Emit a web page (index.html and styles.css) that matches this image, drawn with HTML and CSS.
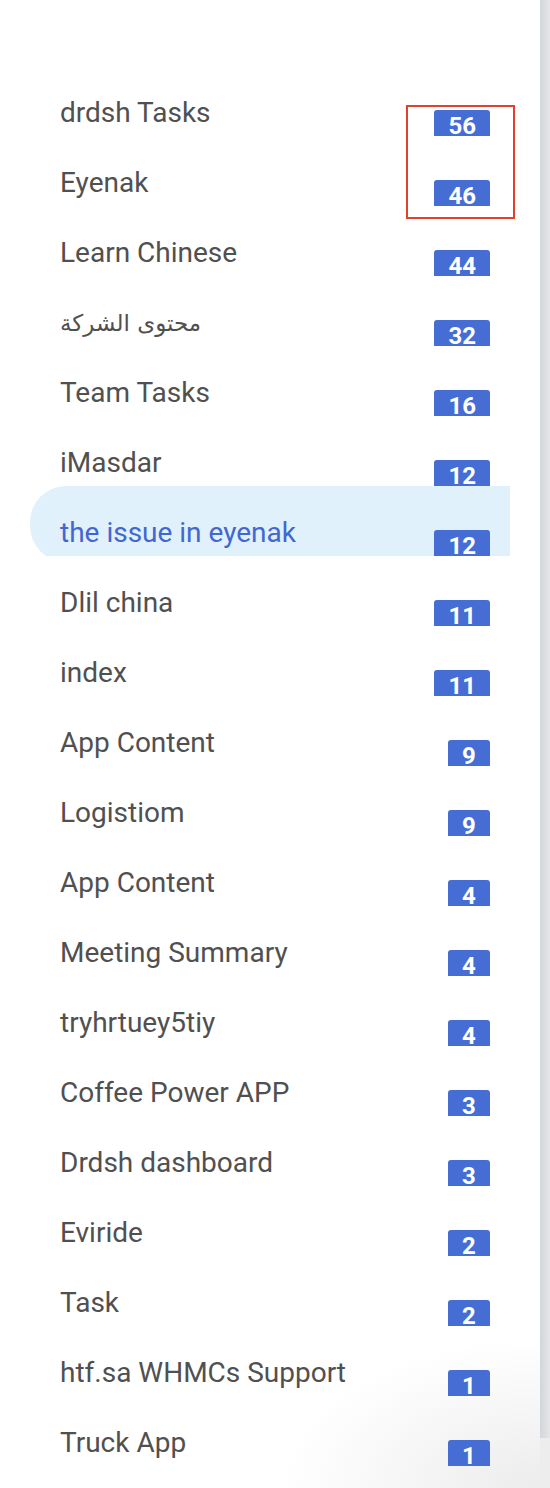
FILE: index.html
```html
<!DOCTYPE html>
<html lang="en">
<head>
<meta charset="utf-8">
<title>Projects</title>
<link rel="stylesheet" href="styles.css">
</head>
<body>
<div class="page">
  <nav class="sidebar">
    <ul class="list">
      <li class="row"><div class="item"><span class="name">drdsh Tasks</span><span class="badge">56</span></div></li>
      <li class="row"><div class="item"><span class="name">Eyenak</span><span class="badge">46</span></div></li>
      <li class="row"><div class="item"><span class="name">Learn Chinese</span><span class="badge">44</span></div></li>
      <li class="row"><div class="item"><span class="name arabic" dir="rtl">محتوى الشركة</span><span class="badge">32</span></div></li>
      <li class="row"><div class="item"><span class="name">Team Tasks</span><span class="badge">16</span></div></li>
      <li class="row"><div class="item"><span class="name">iMasdar</span><span class="badge">12</span></div></li>
      <li class="row"><div class="item active"><span class="name">the issue in eyenak</span><span class="badge">12</span></div></li>
      <li class="row"><div class="item"><span class="name">Dlil china</span><span class="badge">11</span></div></li>
      <li class="row"><div class="item"><span class="name">index</span><span class="badge">11</span></div></li>
      <li class="row"><div class="item"><span class="name">App Content</span><span class="badge">9</span></div></li>
      <li class="row"><div class="item"><span class="name">Logistiom</span><span class="badge">9</span></div></li>
      <li class="row"><div class="item"><span class="name">App Content</span><span class="badge">4</span></div></li>
      <li class="row"><div class="item"><span class="name">Meeting Summary</span><span class="badge">4</span></div></li>
      <li class="row"><div class="item"><span class="name">tryhrtuey5tiy</span><span class="badge">4</span></div></li>
      <li class="row"><div class="item"><span class="name">Coffee Power APP</span><span class="badge">3</span></div></li>
      <li class="row"><div class="item"><span class="name">Drdsh dashboard</span><span class="badge">3</span></div></li>
      <li class="row"><div class="item"><span class="name">Eviride</span><span class="badge">2</span></div></li>
      <li class="row"><div class="item"><span class="name">Task</span><span class="badge">2</span></div></li>
      <li class="row"><div class="item"><span class="name">htf.sa WHMCs Support</span><span class="badge">1</span></div></li>
      <li class="row"><div class="item"><span class="name">Truck App</span><span class="badge">1</span></div></li>
    </ul>
  </nav>
  <div class="scrollbar">
    <div class="thumb"></div>
    <div class="track"></div>
  </div>
  <div class="highlight-box"></div>
</div>
</body>
</html>
```

FILE: styles.css
```css
html, body {
  margin: 0;
  padding: 0;
  background: #ffffff;
}

.page {
  position: relative;
  display: flex;
  width: 550px;
  height: 1488px;
  overflow: hidden;
}

.sidebar {
  flex: 1;
  padding-top: 66px;
  background:
    radial-gradient(ellipse 260px 150px at 100% 100%, #ececec 0%, rgba(255,255,255,0) 100%),
    #ffffff;
}

.list {
  list-style: none;
  margin: 0;
  padding: 0 30px 0 30px;
  width: 480px;
}

.row {
  height: 70px;
  overflow: hidden;
}

.item {
  display: flex;
  align-items: flex-start;
  justify-content: space-between;
  height: 76px;
  padding: 32px 20px 0 30px;
  box-sizing: border-box;
  border-radius: 36px 0 0 36px;
}

.item.active {
  background: #e1f1fb;
}

.name {
  font-family: Roboto, "Liberation Sans", sans-serif;
  font-size: 28px;
  line-height: 30px;
  color: #505050;
  white-space: nowrap;
}

.item.active .name {
  color: #4267d2;
}

.arabic {
  font-family: "DejaVu Sans", sans-serif;
  font-size: 23px;
}

.badge {
  margin-top: 12px;
  padding: 3px 14px 6px;
  min-width: 14px;
  text-align: center;
  font-family: Roboto, "Liberation Sans", sans-serif;
  font-weight: 700;
  font-size: 24px;
  line-height: 27px;
  color: #ffffff;
  background: #456dd3;
  border-radius: 3px 3px 0 0;
}

.scrollbar {
  width: 10px;
  display: flex;
  flex-direction: column;
}

.thumb {
  height: 1438px;
  background: linear-gradient(to right, #d3d6d9, #e4e6e8);
}

.track {
  flex: 1;
  background: #ededed;
}

.highlight-box {
  position: absolute;
  left: 406px;
  top: 105px;
  width: 109px;
  height: 114px;
  box-sizing: border-box;
  border: 2px solid #e2412e;
  pointer-events: none;
}
```
